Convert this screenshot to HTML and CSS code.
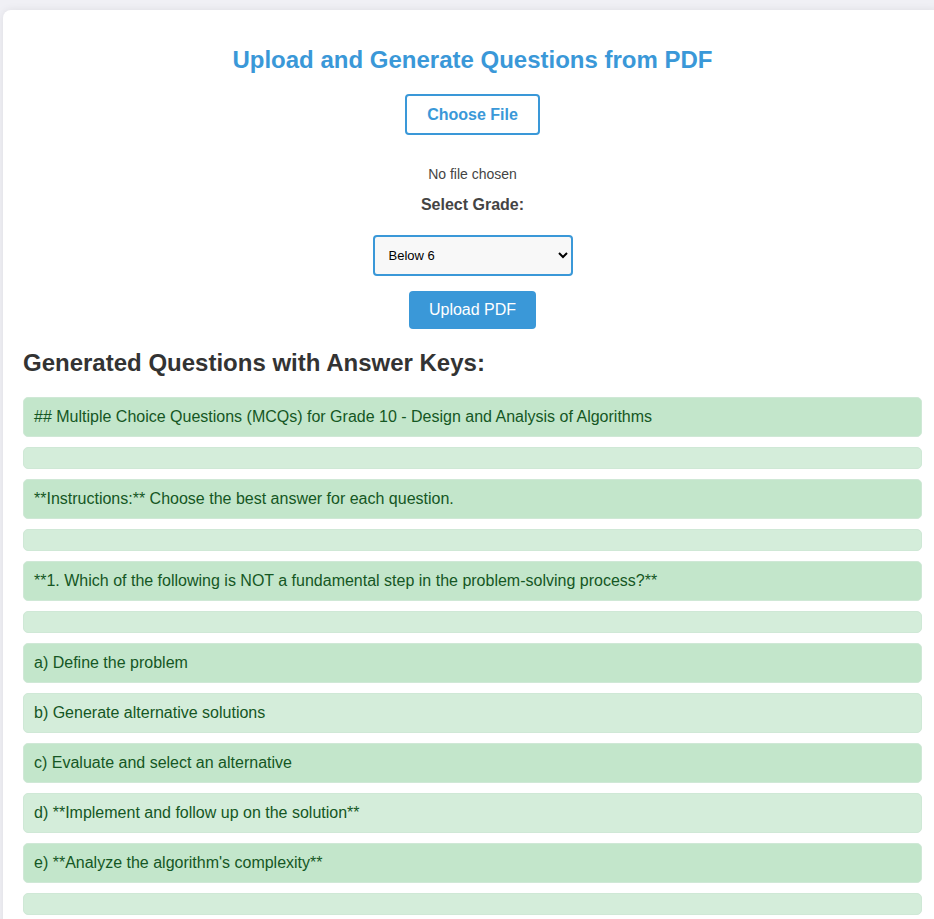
FILE: index.html
```html
<!DOCTYPE html>
<html>
<head>
<meta charset="utf-8">
<link rel="stylesheet" href="styles.css">
</head>
<body>
<div class="card">
  <h1 class="title">Upload and Generate Questions from PDF</h1>
  <div class="form">
    <button class="choose">Choose File</button>
    <div class="nofile">No file chosen</div>
    <label class="grade-label">Select Grade:</label>
    <select class="grade">
      <option>Below 6</option>
    </select>
    <button class="upload">Upload PDF</button>
  </div>
  <h2 class="results-title">Generated Questions with Answer Keys:</h2>
  <ul class="questions">
    <li>## Multiple Choice Questions (MCQs) for Grade 10 - Design and Analysis of Algorithms</li>
    <li></li>
    <li>**Instructions:** Choose the best answer for each question.</li>
    <li></li>
    <li>**1. Which of the following is NOT a fundamental step in the problem-solving process?**</li>
    <li></li>
    <li>a) Define the problem</li>
    <li>b) Generate alternative solutions</li>
    <li>c) Evaluate and select an alternative</li>
    <li>d) **Implement and follow up on the solution**</li>
    <li>e) **Analyze the algorithm's complexity**</li>
    <li></li>
  </ul>
</div>
</body>
</html>
```

FILE: styles.css
```css
html, body {
  margin: 0;
  padding: 0;
  overflow: hidden;
}
body {
  background: #f0f0f5;
  font-family: "Liberation Sans", Arial, sans-serif;
  width: 934px;
  height: 919px;
}
.card {
  margin: 10px 0 0 3px;
  width: 939px;
  box-sizing: border-box;
  background: #fff;
  border-radius: 8px;
  box-shadow: 0 0 8px rgba(0, 0, 0, 0.08);
  padding: 33px 20px 20px 20px;
}
.title {
  margin: 0;
  text-align: center;
  color: #3a98d8;
  font-size: 24px;
  line-height: 34px;
  font-weight: bold;
}
.form {
  display: flex;
  flex-direction: column;
  align-items: center;
  margin-top: 17px;
}
.choose {
  width: 135px;
  height: 41px;
  box-sizing: border-box;
  border: 2px solid #3a98d8;
  border-radius: 4px;
  background: #fff;
  color: #3a98d8;
  font-family: "Liberation Sans", Arial, sans-serif;
  font-weight: bold;
  font-size: 16px;
}
.nofile {
  margin-top: 31px;
  font-size: 14px;
  line-height: 16px;
  color: #444;
}
.grade-label {
  margin-top: 14px;
  font-size: 16px;
  line-height: 18px;
  font-weight: bold;
  color: #444;
}
.grade {
  margin-top: 21px;
  width: 200px;
  height: 41px;
  box-sizing: border-box;
  border: 2px solid #3a98d8;
  border-radius: 4px;
  background: #f8f8f8;
  font-family: "Liberation Sans", Arial, sans-serif;
  font-size: 13px;
  padding: 0 10px;
  color: #000;
}
.upload {
  margin-top: 15px;
  width: 127px;
  height: 38px;
  border: none;
  border-radius: 4px;
  background: #3a98d8;
  color: #fff;
  font-family: "Liberation Sans", Arial, sans-serif;
  font-size: 16px;
}
.results-title {
  margin: 19px 0 0 0;
  font-size: 24px;
  line-height: 30px;
  font-weight: bold;
  color: #333;
}
.questions {
  list-style: none;
  margin: 19px 0 0 0;
  padding: 0;
  display: flex;
  flex-direction: column;
  gap: 10px;
}
.questions li {
  min-height: 18px;
  padding: 10px;
  font-size: 16px;
  line-height: 18px;
  color: #155724;
  background: #d4edda;
  border: 1px solid #cfe8d6;
  border-radius: 5px;
}
.questions li:empty {
  min-height: 0;
  height: 0;
}
.questions li:nth-child(odd) {
  background: #c3e6cb;
}
.questions li:nth-child(n+7):nth-child(even) {
  background: #d4edda;
}
```
